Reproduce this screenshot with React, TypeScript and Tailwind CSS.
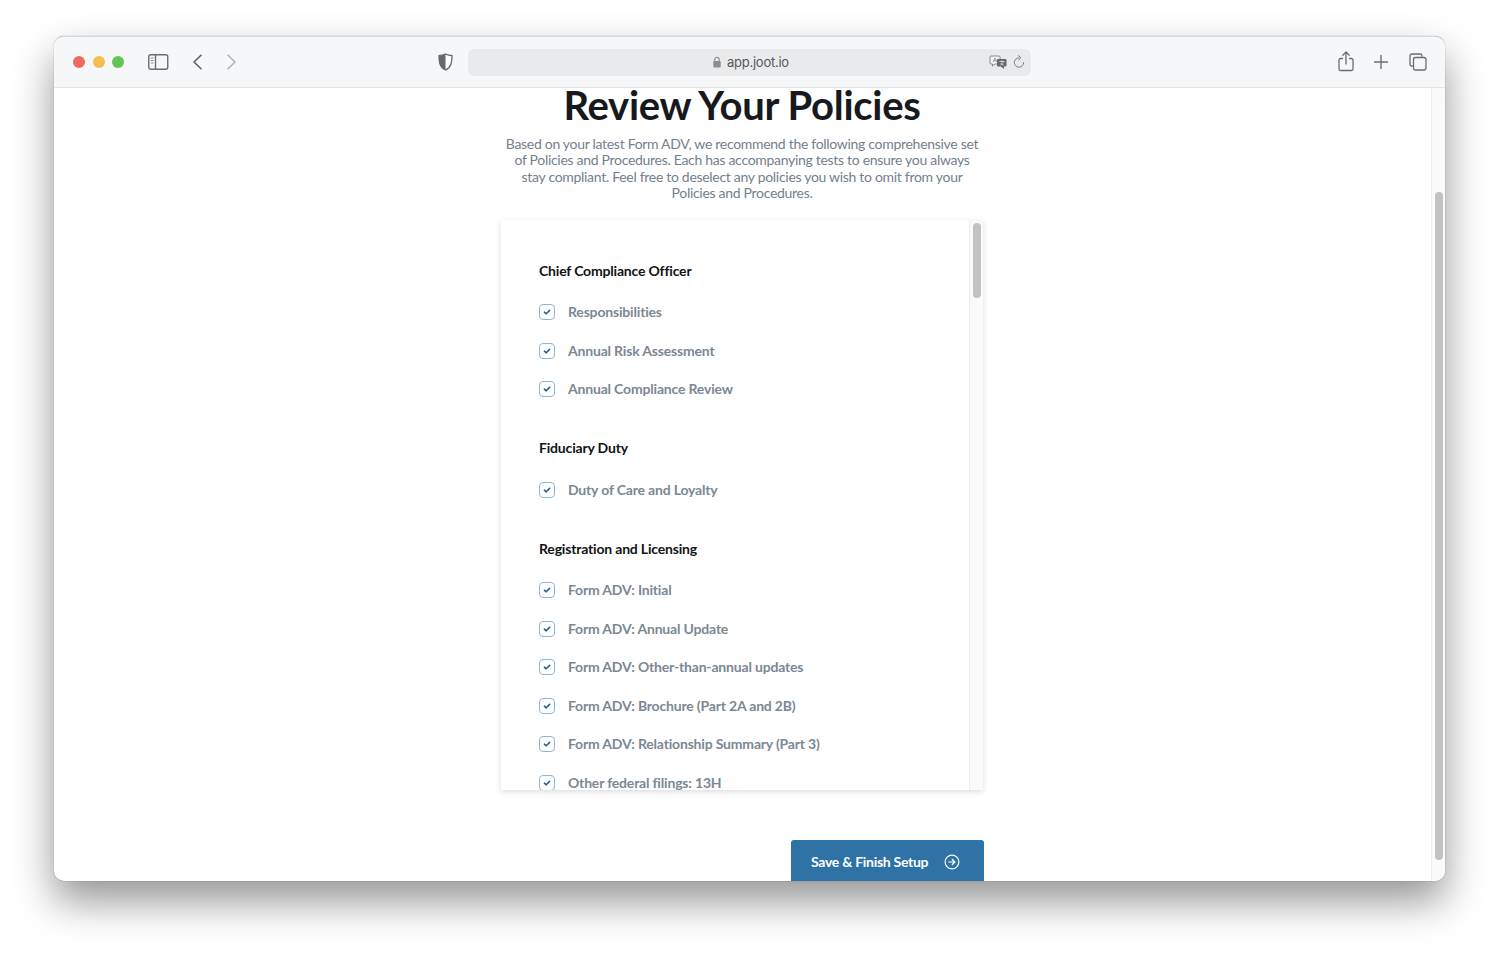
const Check = () => (
  <span className="flex h-4 w-4 shrink-0 items-center justify-center rounded-[4px] border border-[#8db6d6] bg-white">
    <svg width="10" height="10" viewBox="0 0 10 10" fill="none">
      <path d="M2.400 5.200 4.200 6.800 7.600 3.400" stroke="#1f6098" strokeWidth="1.600" strokeLinecap="round" strokeLinejoin="round" />
    </svg>
  </span>
);

const sections = [
  { title: "Chief Compliance Officer", items: ["Responsibilities", "Annual Risk Assessment", "Annual Compliance Review"] },
  { title: "Fiduciary Duty", items: ["Duty of Care and Loyalty"] },
  {
    title: "Registration and Licensing",
    items: [
      "Form ADV: Initial",
      "Form ADV: Annual Update",
      "Form ADV: Other-than-annual updates",
      "Form ADV: Brochure (Part 2A and 2B)",
      "Form ADV: Relationship Summary (Part 3)",
      "Other federal filings: 13H",
    ],
  },
];

const Toolbar = () => (
  <div className="flex h-[51px] shrink-0 items-center border-b border-[#e4e5e7] bg-[#f6f7f9] pb-[1px]">
    <div className="ml-[19px] flex gap-[7.5px]">
      <span className="h-3 w-3 rounded-full bg-[#ee6a5f]" />
      <span className="h-3 w-3 rounded-full bg-[#f5bd4f]" />
      <span className="h-3 w-3 rounded-full bg-[#61c454]" />
    </div>
    <svg className="ml-[24px]" width="21" height="16" viewBox="0 0 21 16" fill="none">
      <rect x="0.75" y="0.75" width="19" height="14.5" rx="2" stroke="#6b6d70" strokeWidth="1.4" />
      <path d="M7.500 1v14" stroke="#6b6d70" strokeWidth="1.4" />
      <path d="M2.800 4h2.600M2.800 6.500h2.600M2.800 9h2.600" stroke="#8a8c8f" strokeWidth="1.100" />
    </svg>
    <svg className="ml-[23px]" width="11" height="16" viewBox="0 0 11 16" fill="none">
      <path d="M9 1.200 2 8l7 6.800" stroke="#5e6063" strokeWidth="1.600" strokeLinecap="round" strokeLinejoin="round" />
    </svg>
    <svg className="ml-[23px]" width="11" height="16" viewBox="0 0 11 16" fill="none">
      <path d="M2 1.200 9 8l-7 6.800" stroke="#b1b3b6" strokeWidth="1.600" strokeLinecap="round" strokeLinejoin="round" />
    </svg>
    <svg className="ml-[201px]" width="15" height="18" viewBox="0 0 15 18" fill="none">
      <path d="M7.500 1C5.500 2 3 2.500 1 2.600 1 8 1.200 14 7.500 17 13.800 14 14 8 14 2.600 12 2.500 9.500 2 7.500 1Z" fill="#fff" stroke="#66686b" strokeWidth="1.300" />
      <path d="M7.500 1C5.500 2 3 2.500 1 2.600 1 8 1.200 14 7.500 17Z" fill="#66686b" />
    </svg>
    <div className="ml-[15px] mt-[1px] flex h-[27px] w-[563px] items-center rounded-[6px] bg-[#e9eaec]">
      <div className="ml-[245px] flex items-center gap-[6px]">
        <svg width="8" height="12" viewBox="0 0 8 12" fill="none">
          <path d="M1.800 5V3.400a2.200 2.200 0 0 1 4.400 0V5" stroke="#8a8c8f" strokeWidth="1.100" />
          <rect x="0.3" y="5" width="7.400" height="6.500" rx="1" fill="#8a8c8f" />
        </svg>
        <span className="mt-[1px] text-[13px] tracking-[-0.25px] text-[#55575a] [font-family:'Inter','Liberation_Sans',sans-serif]">app.joot.io</span>
      </div>
      <svg className="ml-auto" width="18" height="14" viewBox="0 0 18 14" fill="none">
        <path d="M2 1h8a1 1 0 0 1 1 1v6a1 1 0 0 1-1 1H6L3.500 11V9H2a1 1 0 0 1-1-1V2a1 1 0 0 1 1-1Z" fill="#f2f3f4" stroke="#88898c" strokeWidth="1" />
        <path d="M4 7l2-4 2 4M4.700 5.800h2.600" stroke="#88898c" strokeWidth="0.8" />
        <path d="M9 4h7.500a1 1 0 0 1 1 1v5.500a1 1 0 0 1-1 1H15V14l-3-2.500H9a1 1 0 0 1-1-1V5a1 1 0 0 1 1-1Z" fill="#66686b" />
        <path d="M10.500 6.500h5M13 5.500v1M11.500 10c1.500-.7 2.500-2 2.800-3.500M11.700 8c.6 1 1.500 1.700 2.800 2" stroke="#e9eaec" strokeWidth="0.8" />
      </svg>
      <svg className="ml-[6px] mr-[6px]" width="12" height="14" viewBox="0 0 12 14" fill="none">
        <path d="M6 2.800a4.700 4.700 0 1 0 4.700 4.700" stroke="#7b7d80" strokeWidth="1" strokeLinecap="round" />
        <path d="M5.500 0.600 7.800 2.800 5.500 5" stroke="#7b7d80" strokeWidth="1" strokeLinecap="round" strokeLinejoin="round" />
      </svg>
    </div>
    <svg className="ml-[307px]" width="16" height="21" viewBox="0 0 16 21" fill="none">
      <path d="M5 7.500H2.500a1.500 1.500 0 0 0-1.500 1.500v9a1.500 1.500 0 0 0 1.500 1.500h11A1.500 1.500 0 0 0 15 18V9a1.500 1.500 0 0 0-1.500-1.500H11" stroke="#6b6d70" strokeWidth="1.300" />
      <path d="M8 13V1.200M4.800 4.200 8 1l3.200 3.200" stroke="#6b6d70" strokeWidth="1.300" strokeLinecap="round" strokeLinejoin="round" />
    </svg>
    <svg className="ml-[20px]" width="14" height="14" viewBox="0 0 14 14" fill="none">
      <path d="M7 0.500v13M0.500 7h13" stroke="#6b6d70" strokeWidth="1.400" strokeLinecap="round" />
    </svg>
    <svg className="ml-[21px]" width="18" height="18" viewBox="0 0 18 18" fill="none">
      <path d="M3.800 13H2.800A1.800 1.800 0 0 1 1 11.200V2.800A1.800 1.800 0 0 1 2.800 1h8.400A1.800 1.800 0 0 1 13 2.800v1" stroke="#6b6d70" strokeWidth="1.300" />
      <rect x="4.500" y="4.500" width="12.500" height="12.500" rx="2" stroke="#6b6d70" strokeWidth="1.300" />
    </svg>
  </div>
);

export default function App() {
  return (
    <div className="h-[953px] w-[1499px] overflow-hidden bg-white pl-[54px] pt-[36px] [font-family:'Lato','Liberation_Sans',sans-serif]">
      <div className="flex h-[845px] w-[1391px] flex-col overflow-hidden rounded-[10px] border-t border-[#d5d6d8] bg-white shadow-[0_0_1px_rgba(0,0,0,0.5),0_20px_40px_rgba(0,0,0,0.42)]">
        <Toolbar />
        <div className="flex min-h-0 flex-1">
          <main className="flex min-w-0 flex-1 flex-col items-center pr-[1px]">
            <h1 className="text-[40px] font-bold leading-[34px] tracking-[-0.3px] text-[#16191d]">Review Your Policies</h1>
            <p className="mt-[14px] w-[482px] text-center text-[14px] leading-[16.4px] tracking-[-0.3px] text-[#74808c]">
              Based on your latest Form ADV, we recommend the following comprehensive set of Policies and Procedures. Each has accompanying tests to ensure you always stay compliant. Feel free to deselect any policies you wish to omit from your Policies and Procedures.
            </p>
            <div className="mt-[18px] flex h-[570px] w-[482px] shrink-0 bg-white shadow-[0_2px_6px_rgba(0,0,0,0.14)]">
              <div className="min-w-0 flex-1 overflow-hidden pl-[38px] pt-[42px]">
                <div className="flex flex-col gap-[41px]">
                  {sections.map((s) => (
                    <section key={s.title}>
                      <h2 className="text-[14px] font-bold leading-[18px] tracking-[-0.18px] text-[#111315]">{s.title}</h2>
                      <ul className="mt-[23.4px] flex flex-col gap-[20.6px]">
                        {s.items.map((item) => (
                          <li key={item} className="flex h-[18px] items-center gap-[13px]">
                            <Check />
                            <span className="text-[14px] font-bold leading-[18px] tracking-[-0.18px] text-[#7b8894]">{item}</span>
                          </li>
                        ))}
                      </ul>
                    </section>
                  ))}
                </div>
              </div>
              <div className="flex w-[14px] shrink-0 justify-center border-l border-[#ececec] bg-[#fafafa] pt-[3px]">
                <div className="h-[75px] w-[8px] rounded-full bg-[#c2c2c2]" />
              </div>
            </div>
            <div className="-mr-[1px] mt-[50px] flex w-[483px] justify-end">
              <button className="flex h-[44px] w-[193px] shrink-0 items-center justify-between rounded-[3px] bg-[#2e72a6] pb-[1px] pl-[20px] pr-[24px] text-[14px] font-bold tracking-[-0.28px] text-white">
                Save &amp; Finish Setup
                <svg width="16" height="16" viewBox="0 0 16 16" fill="none" className="mt-[2px]">
                  <circle cx="8" cy="8" r="6.900" stroke="#fff" strokeWidth="1.200" />
                  <path d="M4.800 8h6M8.300 5.500 10.800 8l-2.500 2.500" stroke="#fff" strokeWidth="1.200" strokeLinecap="round" strokeLinejoin="round" />
                </svg>
              </button>
            </div>
          </main>
          <div className="flex w-[14px] shrink-0 justify-center border-l border-[#ececec] bg-[#fafafa] pt-[104px]">
            <div className="h-[668px] w-[8px] rounded-full bg-[#c2c2c2]" />
          </div>
        </div>
      </div>
    </div>
  );
}
